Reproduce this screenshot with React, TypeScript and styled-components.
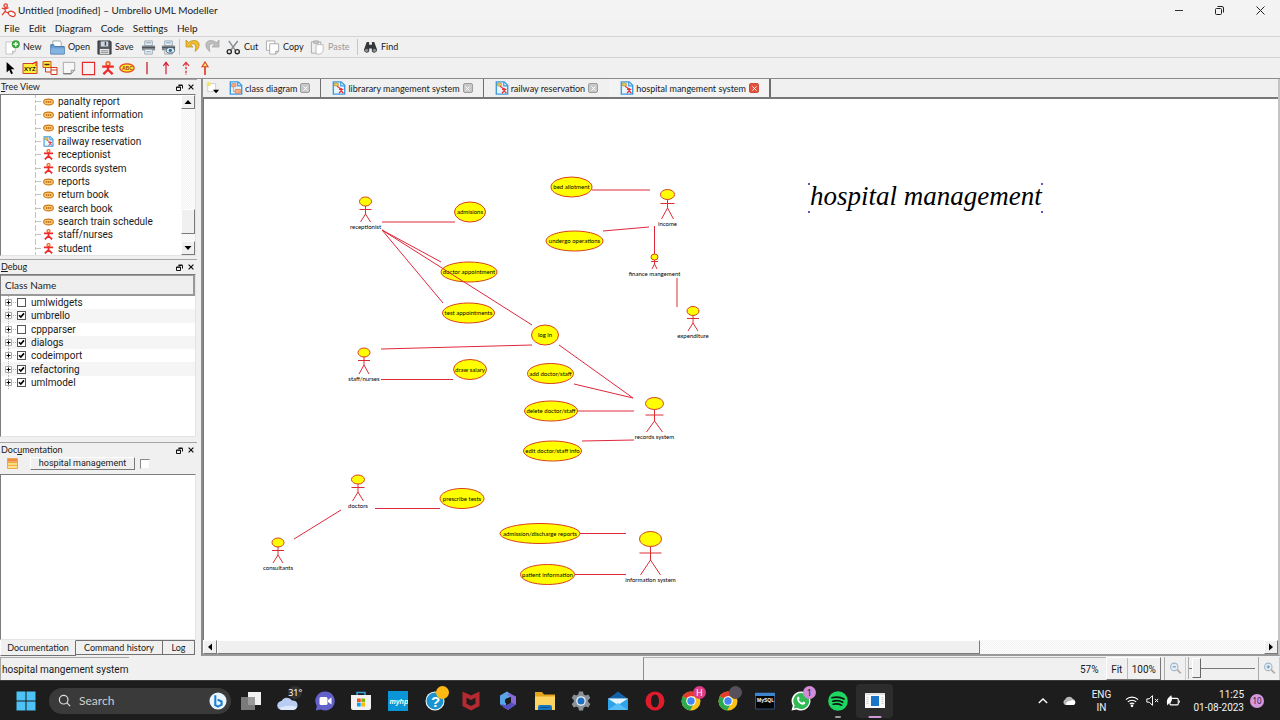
import React from 'react';
import styled, { createGlobalStyle, css } from 'styled-components';

const UI = '"Noto Sans", "Open Sans", sans-serif';
const SMALL = 'Lato, "Open Sans", sans-serif';
const TEXT = 'Roboto, "Open Sans", sans-serif';
const FACE = '#f0f0f0';
const EDGE = '#8a8a8a';

const GlobalStyle = createGlobalStyle`
  *, *::before, *::after { box-sizing: border-box; }
  body { margin: 0; background: ${FACE}; color: #1a1a1a; font-family: ${TEXT}; font-size: 10px; font-variant-ligatures: none; }
  button, input, textarea { font: inherit; color: inherit; margin: 0; }
  button { border: 0; padding: 0; background: none; }
  svg { display: block; flex: none; }
  ul { list-style: none; margin: 0; padding: 0; }
`;

const Page = styled.div`
  display: flex;
  flex-direction: column;
  min-height: 100vh;
`;

/* ---------- window frame ---------- */

const TitleBar = styled.header`
  display: flex;
  align-items: center;
  height: 20px;
  padding-left: 1px;
  gap: 2px;
  background: #f4f3f4;
`;
const WindowTitle = styled.h1`
  flex: 1;
  margin: 0;
  font: 400 10px/20px ${SMALL};
`;
const WindowButton = styled.button`
  display: grid;
  place-items: center;
  width: 39px;
  height: 20px;
`;
const MenuBar = styled.nav`
  display: flex;
  height: 16px;
  padding-left: 4px;
  gap: 9px;
  background: #f2f2f2;
`;
const MenuItem = styled.button`
  font: 400 10px/16px ${SMALL};
`;
const ToolBar = styled.div`
  display: flex;
  align-items: center;
  height: 22px;
  padding-left: 5px;
  border-top: 1px solid #d4d4d4;
  border-bottom: 1px solid #d4d4d4;
`;
const ToolButton = styled.button<{ $w: number }>`
  display: flex;
  align-items: center;
  gap: 3px;
  width: ${(p) => p.$w}px;
  height: 20px;
  font: 400 9px/20px ${SMALL};
  white-space: nowrap;
  &:disabled { color: #9a9a9a; }
`;
const ToolSeparator = styled.span`
  width: 1px;
  height: 16px;
  margin-right: 5px;
  background: #c6c6c6;
`;
const WidgetBar = styled.div`
  display: flex;
  height: 20px;
  width: 215px;
  padding-left: 1px;
`;
const WidgetButton = styled.button`
  flex: 1;
  display: grid;
  place-items: center;
`;

/* ---------- docks ---------- */

const Workspace = styled.main`
  flex: 1;
  display: flex;
  min-height: 0;
  border-top: 1px solid ${EDGE};
`;
const Docks = styled.aside`
  display: flex;
  flex-direction: column;
  width: 197px;
`;
const Dock = styled.section<{ $h: number; $grow?: boolean }>`
  display: flex;
  flex-direction: column;
  flex: ${(p) => (p.$grow ? 1 : 0)} 0 ${(p) => p.$h}px;
`;
const DockHeader = styled.header`
  display: flex;
  align-items: center;
  height: 15px;
  padding: 0 2px 0 1px;
  gap: 4px;
  border-top: 1px solid #a5a5a5;
`;
const DockTitle = styled.h2`
  flex: 1;
  margin: 0;
  font: 400 9px/14px ${SMALL};
`;
const IconButton = styled.button`
  display: grid;
  place-items: center;
  width: 8px;
  height: 10px;
`;
const sunken = css`
  border: 1px solid;
  border-color: #7c7c7c #e4e4e4 #e4e4e4 #7c7c7c;
`;
const TreeFrame = styled.div`
  display: flex;
  height: 162px;
  margin-right: 1px;
  background: #fff;
  ${sunken}
`;
const TreeList = styled.ul`
  flex: 1;
  display: flex;
  flex-direction: column;
`;
const TreeRow = styled.li`
  flex: 1;
  display: flex;
  align-items: center;
  margin-left: 34px;
  border-left: 1px dashed #c4c4bc;
  font: 400 10px/13px ${TEXT};
  &::before {
    content: '';
    width: 5px;
    margin-right: 2px;
    border-top: 1px dashed #c4c4bc;
  }
  span { margin-left: 4px; }
`;
const VScroll = styled.div`
  display: flex;
  flex-direction: column;
  width: 14px;
  background: repeating-conic-gradient(#f1f1f1 0 25%, #fff 0 50%) 0 0 / 2px 2px;
`;
const raised = css`
  background: ${FACE};
  border: 1px solid;
  border-color: #fff #7a7a7a #7a7a7a #fff;
`;
const ScrollArrow = styled.button`
  display: grid;
  place-items: center;
  width: 14px;
  height: 14px;
  flex: none;
  ${raised}
`;
const VThumb = styled.div`
  height: 25px;
  margin: auto 0 7px;
  ${raised}
`;

const ClassFrame = styled.div`
  flex: 1;
  margin: 0 1px 5px 0;
  background: #fff;
  ${sunken}
`;
const ClassHeader = styled.div`
  height: 21px;
  padding-left: 4px;
  background: #efefef;
  border: 1px solid #999;
  border-width: 1px 2px 2px 0;
  font: 400 10px/19px ${SMALL};
`;
const ClassList = styled.ul`
  display: flex;
  flex-direction: column;
  height: 93px;
`;
const ClassRow = styled.li`
  flex: 1;
  display: flex;
  align-items: center;
  padding-left: 4px;
  &:nth-child(even) { background: #f5f5f5; }
  label {
    display: flex;
    align-items: center;
    gap: 5px;
    font: 400 10px/13px ${TEXT};
  }
`;
const Check = styled.input.attrs({ type: 'checkbox' })`
  appearance: none;
  width: 9px;
  height: 9px;
  background: #fff;
  border: 1px solid #555;
  &:checked {
    background: #fff url("data:image/svg+xml,%3Csvg xmlns='http://www.w3.org/2000/svg' viewBox='0 0 7 7'%3E%3Cpath d='M1 3.2 L2.8 5 L6 1.4' fill='none' stroke='%23000' stroke-width='1.6'/%3E%3C/svg%3E") center / 7px 7px no-repeat;
  }
`;
const DocRow = styled.div`
  display: flex;
  align-items: center;
  height: 13px;
  padding-left: 7px;
`;
const DocName = styled.button`
  width: 105px;
  height: 13px;
  margin: 0 5px 0 12px;
  font: 400 9px/11px ${TEXT};
  ${raised}
`;
const DocCheck = styled(Check)`
  width: 10px;
  height: 10px;
  border-color: #888 #eee #eee #888;
`;
const DocText = styled.textarea`
  flex: 1;
  display: block;
  margin: 4px 1px 0 0;
  resize: none;
  outline: 0;
  background: #fff;
  ${sunken}
`;
const DockTabs = styled.div`
  display: flex;
  align-items: flex-start;
  height: 16px;
`;
const DockTab = styled.button<{ $w: number; $active?: boolean }>`
  width: ${(p) => p.$w}px;
  height: ${(p) => (p.$active ? 16 : 15)}px;
  font: 400 9px/14px ${SMALL};
  background: ${FACE};
  border: 1px solid #707070;
  border-left: 0;
  ${(p) => p.$active && 'border-top-color: transparent; border-left: 1px solid #fff;'}
`;

/* ---------- editor ---------- */

const Editor = styled.section`
  flex: 1;
  min-width: 0;
  display: flex;
  flex-direction: column;
  margin-left: 4px;
  border-left: 2px solid #8c8c8c;
  border-right: 2px solid #c4c4c4;
  border-bottom: 2px solid #999;
`;
const TabStrip = styled.div`
  display: flex;
  height: 20px;
  padding-left: 3px;
  border-bottom: 2px solid #777;
`;
const NewTab = styled.button`
  display: grid;
  place-items: center;
  width: 12px;
`;
const Tab = styled.div<{ $active?: boolean; $plain?: boolean }>`
  display: flex;
  align-items: center;
  padding: 0 10px 0 11px;
  gap: 3px;
  border-right: 1px solid ${(p) => (p.$plain ? 'transparent' : '#6e6e6e')};
  ${(p) => p.$active && 'border-right-width: 2px; background: #f3f3f3;'}
`;
const TabName = styled.button`
  display: flex;
  align-items: center;
  gap: 2px;
  font: 400 9px/17px ${SMALL};
  white-space: nowrap;
`;
const CloseTab = styled.button<{ $active?: boolean }>`
  display: grid;
  place-items: center;
  width: 10px;
  height: 10px;
  border-radius: 2px;
  border: 1px solid ${(p) => (p.$active ? '#cf4a38' : '#9c9c9c')};
  background: ${(p) => (p.$active ? '#e2543f' : '#c8c8c8')};
`;
const Canvas = styled.div`
  flex: 1;
  min-height: 0;
  overflow: hidden;
  background: #fff;
  border-left: 1px solid #777;
  svg { width: 100%; height: 100%; }
`;
const HScroll = styled.div`
  display: flex;
  height: 14px;
  background: repeating-conic-gradient(#f1f1f1 0 25%, #fff 0 50%) 0 0 / 2px 2px;
`;
const HThumb = styled.div`
  width: 71%;
  margin-right: auto;
  ${raised}
`;

/* ---------- status bar ---------- */

const StatusBar = styled.footer`
  display: flex;
  align-items: stretch;
  height: 24px;
  padding-top: 1px;
  font: 400 10px/23px ${TEXT};
`;
const StatusText = styled.div`
  flex: 1;
  span { display: inline-block; padding: 0 1px; border-top: 1px solid #a8a8a8; border-left: 1px solid #a8a8a8; }
`;
const StatusCell = styled.div`
  flex: 0 0 429px;
  border-left: 1px solid #8c8c8c;
  border-top: 1px solid #b4b4b4;
`;
const ZoomValue = styled.output`
  width: 34px;
  padding-left: 8px;
  border-top: 1px solid #b4b4b4;
`;
const ZoomButtons = styled.div`
  display: flex;
  width: 55px;
  border: 1px solid;
  border-color: #fff #777 #777 #fff;
  button { flex: 1 1 auto; padding: 0 3px; }
  button + button { border-left: 1px solid #bbb; }
`;
const ZoomStep = styled.button`
  display: grid;
  place-items: center;
  width: 22px;
  margin-left: 3px;
  border-left: 1px solid #aaa;
  border-right: 1px solid #ccc;
`;
const ZoomSlider = styled.input.attrs({ type: 'range' })`
  appearance: none;
  width: 67px;
  height: 22px;
  margin-left: 2px;
  background: linear-gradient(#777, #777) center / 100% 1px no-repeat;
  border-left: 1px solid #aaa;
  &::-webkit-slider-thumb {
    appearance: none;
    width: 9px;
    height: 20px;
    background: ${FACE};
    border: 1px solid;
    border-color: #fff #666 #666 #fff;
  }
`;

/* ---------- task bar ---------- */

const TaskBar = styled.footer`
  display: flex;
  align-items: center;
  height: 40px;
  padding: 0 16px;
  background: #1d1d1d;
  border-top: 1px solid #3a3a3a;
  color: #f2f2f2;
`;
const StartButton = styled.button`
  width: 33px;
`;
const SearchBox = styled.label`
  display: flex;
  align-items: center;
  gap: 8px;
  width: 182px;
  height: 26px;
  padding: 0 4px 0 9px;
  border-radius: 13px;
  background: #3a3a3a;
  input {
    flex: 1;
    min-width: 0;
    padding: 0;
    border: 0;
    outline: 0;
    background: none;
    font: 400 12px/20px ${SMALL};
  }
  input::placeholder { color: #cfcfcf; opacity: 1; }
`;
const Pinned = styled.div`
  display: flex;
  width: 660px;
  margin-left: 2px;
`;
const TaskButton = styled.button<{ $mark?: string; $active?: boolean }>`
  flex: 1;
  position: relative;
  display: grid;
  place-items: center;
  height: 34px;
  border-radius: 4px;
  ${(p) => p.$active && 'background: #2c2c2c;'}
  &::after {
    content: '';
    position: absolute;
    bottom: 0;
    left: 50%;
    width: ${(p) => (p.$active ? 13 : 6)}px;
    height: 2px;
    border-radius: 1px;
    transform: translateX(-50%);
    background: ${(p) => p.$mark || 'transparent'};
  }
`;
const Bubble = styled.span<{ $bg: string; $fg: string }>`
  position: absolute;
  top: 2px;
  right: 4px;
  min-width: 13px;
  height: 13px;
  border-radius: 7px;
  text-align: center;
  font: 400 9px/13px ${UI};
  background: ${(p) => p.$bg};
  color: ${(p) => p.$fg};
`;
const Tray = styled.div`
  display: flex;
  align-items: center;
  margin-left: auto;
`;
const TrayButton = styled.button<{ $w: number }>`
  display: flex;
  flex-direction: column;
  align-items: center;
  width: ${(p) => p.$w}px;
  font: 400 10px/13px ${TEXT};
`;
const Clock = styled(TrayButton)`
  align-items: flex-end;
  margin-right: 6px;
`;
const Count = styled.span`
  width: 14px;
  height: 14px;
  border-radius: 7px;
  background: #d698dc;
  color: #3a1440;
  text-align: center;
  font: 400 8px/14px ${UI};
`;

/* ---------- small drawings ---------- */

type IconProps = { w?: number; h?: number; box?: string; children: React.ReactNode };
const Icon = ({ w = 16, h = w, box = '0 0 16 16', children }: IconProps) => (
  <svg width={w} height={h} viewBox={box} fill="none" aria-hidden="true">{children}</svg>
);

const AppLogo = () => (
  <Icon w={15}>
    <g stroke="#e03a2a" strokeWidth="1.3">
      <circle cx="5" cy="2.8" r="1.8" /><path d="M1 5.5 4 6.5 8 5M4.5 5v4L1 13M4.5 9 8 11" />
      <ellipse cx="11.5" cy="11.5" rx="3.8" ry="2.5" transform="rotate(25 11.5 11.5)" fill="#fff" />
    </g>
  </Icon>
);
const ActorIcon = ({ size = 11 }: { size?: number }) => (
  <Icon w={size} box="0 0 12 12">
    <circle cx="6" cy="2.3" r="1.7" stroke="#ea5a2a" strokeWidth="1.2" fill="#ffd9a0" />
    <path d="M1 4.8h10M6 4v4M6 7.5 2 11.3M6 7.5l4 3.8" stroke="#ee2b2b" strokeWidth="2" />
  </Icon>
);
const UseCaseIcon = () => (
  <Icon w={11} h={8} box="0 0 11 8">
    <ellipse cx="5.5" cy="4" rx="4.9" ry="2.9" fill="#ffcf6b" stroke="#cc7a22" strokeWidth="1.1" />
    <path d="M2.8 4h5.4" stroke="#b05a18" strokeWidth="1.3" strokeDasharray="1.5 .6" />
  </Icon>
);
const DiagramIcon = ({ size = 14, cls = false }: { size?: number; cls?: boolean }) => (
  <Icon w={size}>
    <path d="M1.5 1h9l4 4v10h-13z" fill="#e9f5ff" stroke="#3d9be0" strokeWidth="1.6" />
    <path d="M10 1v4.500h4.500" stroke="#3d9be0" strokeWidth="1.4" />
    {cls ? (
      <g fill="#f6b08a" stroke="#d9764a" strokeWidth=".8"><path d="M3 3h5v3.500H3zM7 9.500h6V14H7z" /><path d="M5 6.500V12h2" fill="none" /></g>
    ) : (
      <g><ellipse cx="5" cy="4" rx="2.600" ry="1.800" fill="#e8d060" stroke="#b08a30" /><path d="M6 6l4 3M8 9.500h5M10.500 8v4M10.500 11 8 14M10.500 11l2.500 3" stroke="#e63434" strokeWidth="1.400" /></g>
    )}
  </Icon>
);
const FloatIcon = () => (
  <Icon w={7} box="0 0 7 7"><path d="M2.500 1.500h4v3M2.500 1h4M.5 3h4v3.500h-4zM.5 3.300h4" stroke="#111" /></Icon>
);
const CrossIcon = ({ size = 6, color = '#111' }: { size?: number; color?: string }) => (
  <Icon w={size} box="0 0 6 6"><path d="M.6.6l4.800 4.800M5.400.6.6 5.400" stroke={color} strokeWidth="1.200" /></Icon>
);
const Arrow = ({ turn }: { turn: number }) => (
  <Icon w={8} box="0 0 8 8"><path d="M4 2l3.500 4h-7z" fill="#000" transform={`rotate(${turn} 4 4)`} /></Icon>
);
const PrinterBody = () => (
  <g>
    <path d="M4 1h8v5H4z" fill="#eaf1f6" stroke="#9aa5ad" /><path d="M1 6h14v5H1z" fill="#7d858b" />
    <path d="M1 8h14" stroke="#4a5258" /><path d="M4 10h8v5H4z" fill="#f6f6f6" stroke="#9aa5ad" /><path d="M5.500 3h5M5.500 12.500h5" stroke="#6d9bc0" />
  </g>
);
const Magnifier = ({ plus }: { plus?: boolean }) => (
  <Icon w={13}>
    <circle cx="6.500" cy="6" r="4.600" fill="#e2edf6" stroke="#a3b5c6" strokeWidth="1.300" />
    <path d="M4.500 6h4" stroke="#6d92b4" strokeWidth="1.300" />
    {plus && <path d="M6.500 4v4" stroke="#6d92b4" strokeWidth="1.300" />}
    <path d="M10 9.500l4.500 4.500" stroke="#b9aaa0" strokeWidth="2.200" />
  </Icon>
);

const toolIcons: Record<string, React.ReactNode> = {
  New: <Icon w={15}><path d="M1 2h10v10l-3 3H1z" fill="#fff" stroke="#c3c3c3" /><path d="M11 12H8v3" fill="#ddd" stroke="#bbb" /><circle cx="11.500" cy="4.500" r="4.300" fill="#3ba53a" /><path d="M11.500 2v5M9 4.500h5" stroke="#fff" strokeWidth="1.600" /></Icon>,
  Open: <Icon w={15}><path d="M3 1h8l1 2v6H3z" fill="#fff" stroke="#9aa" /><path d="M.8 5h3l1 2h10.400v8H.8z" fill="#6c9fd3" stroke="#4273a8" /><path d="M1 9h14v5.500H1z" fill="#86b4e2" /></Icon>,
  Save: <Icon w={15}><path d="M1 1h13l1 1v13H1z" fill="#53575c" stroke="#2d3034" /><path d="M4 1.500h8v5.500H4z" fill="#cfd8e0" /><path d="M9 2v4" stroke="#444" strokeWidth="1.500" /><path d="M3 9.500h10V15H3z" fill="#e4e6e8" /><path d="M4 11.500h8M4 13.500h8" stroke="#8a8a8a" /></Icon>,
  Print: <Icon w={15}><PrinterBody /></Icon>,
  'Print preview': <Icon w={15}><PrinterBody /><ellipse cx="10" cy="11" rx="4.500" ry="3" fill="#dbe9f3" stroke="#456" /><circle cx="10" cy="11" r="1.700" fill="#256e9a" /></Icon>,
  Undo: <Icon w={16}><path d="M1 1v7h7L5.500 5.600C9 3.500 12 5.500 10 12.500c6-4 5.500-11.500-1.500-11-2 .2-3.700 1-5 2z" fill="#efbd2e" stroke="#b98a1c" strokeWidth=".7" /></Icon>,
  Redo: <Icon w={16}><path d="M15 1v7H8l2.500-2.400C7 3.500 4 5.500 6 12.500 0 8.500 .5 1 7.500 1.500c2 .2 3.700 1 5 2z" fill="#bdbdbd" stroke="#a2a2a2" strokeWidth=".7" /></Icon>,
  Cut: <Icon w={15}><path d="M3 1l7 10M12.500 1 5 11" stroke="#8b8f93" strokeWidth="1.600" /><circle cx="3.500" cy="12.500" r="2.200" stroke="#2c2c2c" strokeWidth="1.500" /><circle cx="12" cy="12.500" r="2.200" stroke="#2c2c2c" strokeWidth="1.500" /></Icon>,
  Copy: <Icon w={15}><path d="M1.500 1h9v10h-9z" fill="#fff" stroke="#aaa" /><path d="M5 4h9.500v8l-3 3H5z" fill="#fff" stroke="#aaa" /><path d="M14.500 12h-3v3" stroke="#999" /></Icon>,
  Paste: <Icon w={15}><path d="M1.500 2h10v12h-10z" fill="#efefef" stroke="#aaa" /><path d="M4 1h5v2.500H4z" fill="#ccc" stroke="#aaa" /><path d="M6.500 5H14v7l-3 3H6.500z" fill="#fff" stroke="#bbb" /></Icon>,
  Find: <Icon w={15}><path d="M4 2h2.500v3h3V2H12l3 8.500a3 3 0 0 1-5.600 1.500V9H6.600v3A3 3 0 0 1 1 10.500z" fill="#35383a" /><circle cx="3.800" cy="11" r="1.800" fill="#8a8f92" /><circle cx="12.200" cy="11" r="1.800" fill="#8a8f92" /></Icon>,
};

const glyph = { fontFamily: 'Liberation Sans, sans-serif', fontWeight: 700 };
const widgetTools: [string, React.ReactNode][] = [
  ['Select', <Icon w={14}><path d="M3 1v12l3-2.600 2.200 4.600 2-1L8 9.500h4z" fill="#000" /></Icon>],
  ['Fork text', <Icon w={16}><path d="M1 3.500h10l4-2v12H1z" fill="#ffee3a" stroke="#c9432a" /><path d="M10 4l4-2M14 2v4" stroke="#e02020" /><text x="2" y="11" fontSize="6" fill="#111" style={glyph}>XYZ</text></Icon>],
  ['Anchor', <Icon w={16}><path d="M1 1.500h8v6H1z" fill="#ffee3a" stroke="#d3541e" /><path d="M2.500 4.500h5" stroke="#522" strokeWidth="1.500" /><path d="M9 7.500h6v7H9zM9 10h6" fill="#fff" stroke="#d33a1e" /><path d="M3.500 7.500V12H9" stroke="#d33a1e" /></Icon>],
  ['Note', <Icon w={14}><path d="M1.500 1.500h13v9l-4 4h-9z" fill="#f7f7f7" stroke="#a0a0a0" /><path d="M14.500 10.500h-4v4z" fill="#ddd" stroke="#8f8f8f" /><path d="M1.500 14.500h9" stroke="#7d7d7d" strokeWidth="1.500" /></Icon>],
  ['Box', <Icon w={15}><path d="M1.500 1.500h13v13h-13z" fill="#f6f0f0" stroke="#e32a2a" strokeWidth="1.200" /></Icon>],
  ['Actor', <ActorIcon size={14} />],
  ['Use case', <Icon w={16}><ellipse cx="8" cy="8" rx="7.200" ry="4.200" fill="#ffe92e" stroke="#e0471e" strokeWidth="1.200" /><text x="3" y="10" fontSize="5" fill="#a33" style={glyph}>ABC</text></Icon>],
  ['Association', <Icon w={14}><path d="M8 1v14" stroke="#cf2030" strokeWidth="1.500" /></Icon>],
  ['Directed association', <Icon w={14}><path d="M8 2v13M5 5.500l3-4 3 4" stroke="#d81f3a" strokeWidth="1.400" /></Icon>],
  ['Dependency', <Icon w={14}><path d="M8 2v14" stroke="#e0303a" strokeWidth="1.600" strokeDasharray="3 1.500" /><path d="M4.500 5.500l3.500-4 3.500 4" stroke="#e0303a" strokeWidth="1.400" /></Icon>],
  ['Generalization', <Icon w={14}><path d="M8 6v10" stroke="#e0301a" strokeWidth="1.800" /><path d="M4.500 6.500 8 1l3.500 5.500z" fill="#ffe07a" stroke="#e0401a" strokeWidth="1.200" /></Icon>],
];

/* ---------- diagram ---------- */

type UseCase = [name: string, cx: number, cy: number, rx: number];
const useCases: UseCase[] = [
  ['bed allotment', 571.5, 187, 20.5], ['admisions', 470, 212, 15.5], ['undergo operations', 574.5, 241, 28.5],
  ['doctor appointment', 469, 272, 28], ['test appointments', 468.5, 313, 26], ['log in', 545, 335, 13.5],
  ['draw salary', 470, 369.5, 16.5], ['add doctor/staff', 550.5, 373.5, 23], ['delete doctor/staff', 551, 411, 26.5],
  ['edit doctor/staff info', 552.5, 451, 29], ['prescribe tests', 462, 498.5, 22],
  ['admission/discharge reports', 540, 533.5, 40], ['patient information', 547.5, 574.5, 27],
];

type Actor = [name: string, cx: number, cy: number, rx: number, ry: number, arm: number, hip: number, foot: number];
const actors: Actor[] = [
  ['receptionist', 365.5, 201.5, 6, 4.5, 209.5, 214, 222], ['income', 667.5, 194.5, 7, 5, 203.5, 208, 219],
  ['finance mangement', 654.5, 257, 3.5, 3, 261.5, 264, 269], ['expenditure', 693, 311, 6, 4.5, 318.5, 323, 331],
  ['staff/nurses', 364, 352.5, 6, 4.5, 360.5, 365, 374], ['records system', 654.5, 403.5, 9, 6, 415, 421, 432],
  ['doctors', 358, 479.5, 6.5, 4.5, 487.5, 492, 501], ['consultants', 278, 542.5, 6, 4.5, 550.5, 555, 563],
  ['information system', 650.5, 539, 11, 7.5, 553, 560, 575],
];

const links: [number, number, number, number][] = [
  [382, 222, 455, 222], [382, 230, 441, 262], [382, 230, 443, 303], [382, 230, 532, 325], [381, 349, 532, 345],
  [381, 379.5, 453, 379.5], [559, 345, 633, 398], [574, 384, 633, 398], [578, 411, 634, 411], [582, 441, 634, 440],
  [592, 190, 650, 190], [603, 231, 649, 227], [654.5, 226, 654.5, 254], [677, 278, 677, 307], [375, 508.5, 440, 508.5],
  [294, 539, 341, 510], [580, 533.5, 626, 533.5], [575, 574.5, 626, 574.5],
];

const Label = styled.text`
  font: 400 6px ${SMALL};
  text-anchor: middle;
  fill: #000;
`;
const Caption = styled.text`
  font: italic 400 27px "Liberation Serif", serif;
  fill: #000;
`;

const Diagram = () => (
  <svg role="img" aria-label="hospital mangement system diagram">
    <g transform="translate(-204 -99)">
      {useCases.map(([name, cx, cy, rx]) => (
        <g key={name}>
          <ellipse cx={cx} cy={cy} rx={rx} ry={10} fill="#ff0" stroke="#d8401c" />
          <Label x={cx} y={cy + 2}>{name}</Label>
        </g>
      ))}
      {links.map(([x1, y1, x2, y2]) => (
        <line key={`${x1}-${y1}-${x2}`} x1={x1} y1={y1} x2={x2} y2={y2} stroke="#e0283c" />
      ))}
      {actors.map(([name, cx, cy, rx, ry, arm, hip, foot]) => (
        <g key={name} stroke="#dc2c34">
          <ellipse cx={cx} cy={cy} rx={rx} ry={ry} fill="#ff0" stroke="#d8401c" />
          <path d={`M${cx} ${cy + ry}V${hip}M${cx - rx} ${arm}h${rx * 2}M${cx - rx + 1} ${foot}L${cx} ${hip}L${cx + rx - 1} ${foot}`} fill="none" />
          <Label x={cx} y={foot + 7} stroke="none">{name}</Label>
        </g>
      ))}
      <Caption x={810} y={205}>hospital management</Caption>
      {[[809, 184], [1042, 184], [809, 212], [1042, 212]].map(([x, y]) => (
        <circle key={`${x}-${y}`} cx={x} cy={y} r="1" fill="#2222a8" />
      ))}
    </g>
  </svg>
);

/* ---------- task bar drawings ---------- */

const Chrome = () => (
  <Icon w={20} box="0 0 20 20">
    <circle cx="10" cy="10" r="9.500" fill="#fbc116" />
    <path d="M10 10 1.800 5.200A9.500 9.500 0 0 1 18.200 5.200H10z" fill="#e33b2e" />
    <path d="M1.800 5.200A9.500 9.500 0 0 0 9 19.400l4-7L10 10z" fill="#2da94f" />
    <circle cx="10" cy="10" r="4.800" fill="#fff" /><circle cx="10" cy="10" r="3.700" fill="#4285f4" />
  </Icon>
);

type Pin = { name: string; art: React.ReactNode; bubble?: [string, string, string]; mark?: string; active?: boolean };
const box = '0 0 20 20';
const pins: Pin[] = [
  { name: 'Task view', art: <Icon w={20} box={box}><path d="M7 1h13v13H7z" fill="#f0f0f0" /><path d="M0 6h14v13H0z" fill="#8b8b8b" opacity=".85" /></Icon> },
  { name: 'Weather', art: <Icon w={22} h={20} box="0 0 22 20"><path d="M5 19a4.500 4.500 0 0 1-.5-9A6 6 0 0 1 15 9.500a4.800 4.800 0 0 1 1.500 9.500z" fill="#b9cdf2" /><path d="M5 19a4 4 0 0 1-3-1.500C7 14 14 14 20 16a4 4 0 0 1-3.500 3z" fill="#dfe9fb" /></Icon>, bubble: ['31°', '#303030', '#fff'] },
  { name: 'Chat', art: <Icon w={20} box={box}><path d="M10 .5a9.500 9.500 0 1 1-4 18L.8 19.600 1.800 15A9.500 9.500 0 0 1 10 .5z" fill="#6260c9" /><rect x="4.500" y="6" width="8" height="8" rx="1.500" fill="#fff" /><path d="M13 9l3.500-2.500v7L13 11z" fill="#fff" /></Icon> },
  { name: 'Store', art: <Icon w={20} box={box}><path d="M6 5V1.500h8V5" stroke="#36a3dd" strokeWidth="1.500" /><path d="M0 4h20v13q0 2-2 2H2q-2 0-2-2z" fill="#f2f2f2" /><path d="M6 7.500h3.700v3.700H6z" fill="#f25022" /><path d="M10.300 7.500H14v3.700h-3.700z" fill="#7fba00" /><path d="M6 11.800h3.700v3.700H6z" fill="#00a4ef" /><path d="M10.300 11.800H14v3.700h-3.700z" fill="#ffb900" /></Icon> },
  { name: 'myHP', art: <Icon w={20} box={box}><path d="M0 0h20v20H0z" fill="#0a96d6" /><text x="1.500" y="12.500" fontSize="7" fill="#fff" style={{ ...glyph, fontStyle: 'italic' }}>myhp</text></Icon> },
  { name: 'Help', art: <Icon w={20} box={box}><circle cx="10" cy="10" r="9.500" fill="#fff" /><circle cx="10" cy="10" r="8.500" fill="#1a94cf" /><text x="6" y="15.500" fontSize="15" fill="#fff" style={glyph}>?</text></Icon>, bubble: ['', '#fdb913', '#000'] },
  { name: 'McAfee', art: <Icon w={20} box={box}><path d="M1.500.5 10 4.500l8.500-4V15L10 19.500 1.500 15zM5.500 6.500v6.200l4.500 2.400 4.500-2.400V6.500L10 9z" fill="#b52a31" fillRule="evenodd" /></Icon> },
  { name: 'Microsoft 365', art: <Icon w={20} box={box}><path d="M9 .5 2 4.500v9l3.500 2L8 14V8l5-2.500V3z" fill="#5aa4e8" /><path d="M11 2l7 3.500v8L10 19l-5-3 8-4V6L9 4z" fill="#8a6ad8" /><path d="M2 13.500 10 19l8-5.500-5-2-5 3-3-1z" fill="#5550bd" /><path d="M10 6.800l3 1.700v3l-3 1.700-3-1.700v-3z" fill="#1d1d1d" /></Icon> },
  { name: 'File Explorer', art: <Icon w={20} box={box}><path d="M0 1h7l2 2.500h11V10H0z" fill="#e6a41c" /><path d="M0 5.500h20V19H0z" fill="#fcd462" /><path d="M3 19v-3q0-2 2-2h10q2 0 2 2v3z" fill="#1676c4" /><path d="M5.500 16.500h9" stroke="#0b4f8f" /></Icon> },
  { name: 'Settings', art: <Icon w={20} box={box}><path d="M8 .5h4l.6 2.800 2 1.100 2.700-.9 2 3.400-2.100 2v2.200l2.100 2-2 3.400-2.700-.9-2 1.100-.6 2.800H8l-.6-2.800-2-1.100-2.700.9-2-3.400 2.100-2V8.900l-2.100-2 2-3.400 2.700.9 2-1.100z" fill="#8b9299" /><circle cx="10" cy="10" r="4.800" fill="#e9f1f8" /><circle cx="10" cy="10" r="3.500" fill="#1d6fc0" /></Icon> },
  { name: 'Mail', art: <Icon w={20} box={box}><path d="M0 8 10 .5 20 8v11H0z" fill="#1463a8" /><path d="M0 7.500h20V19H0z" fill="#2ea3ea" /><path d="M0 7.500h20L10 14z" fill="#e8f4fc" /><path d="M0 19l10-7 10 7z" fill="#57bdf5" /></Icon> },
  { name: 'Opera', art: <Icon w={20} box={box}><path d="M10 .5a9.500 9.500 0 1 0 0 19 9.500 9.500 0 0 0 0-19zm0 3c2.300 0 4 2.800 4 6.500s-1.700 6.500-4 6.500S6 13.700 6 10s1.700-6.500 4-6.500z" fill="#e01b2c" fillRule="evenodd" /></Icon> },
  { name: 'Chrome', art: <Chrome />, bubble: ['H', '#dd3b82', '#fff'] },
  { name: 'Chrome, second profile', art: <Chrome />, bubble: ['', '#57505a', '#fff'] },
  { name: 'MySQL', art: <Icon w={20} box={box}><path d="M.5 2h19v16H.5z" fill="#050505" stroke="#2f4f7d" /><path d="M0 2h20v3H0z" fill="#3d86cf" /><text x="2" y="11" fontSize="5" fill="#fff" style={glyph}>MySQL</text></Icon> },
  { name: 'WhatsApp', art: <Icon w={20} box={box}><path d="M10 .5a9.500 9.500 0 1 1-4.500 17.900L.5 19.500l1.300-4.800A9.500 9.500 0 0 1 10 .5z" fill="#fff" /><path d="M10 2a8 8 0 1 1-4 14.800l-3.200.8.9-3.100A8 8 0 0 1 10 2z" fill="#30b954" /><path d="M6.300 6.200c1-1.300 1.800-.6 2.400 1.300l-.9 1.200c.8 1.500 1.800 2.300 3.300 3l1.200-1.100c2 .8 2.400 1.200 1.500 2.400-2.700 2.800-9-2.800-7.500-6.800z" fill="#fff" /></Icon>, bubble: ['1', '#d18bd8', '#222'] },
  { name: 'Spotify', art: <Icon w={20} box={box}><circle cx="10" cy="10" r="9.800" fill="#1ed760" /><path d="M4 6.800c4-1.200 8.500-.8 12 1.200M4.800 10.200c3.500-1 7-.6 10 1M5.300 13.300c3-.8 5.800-.4 8.300.9" stroke="#111" strokeWidth="1.700" strokeLinecap="round" /></Icon>, mark: '#9a9a9a' },
  { name: 'Umbrello', art: <Icon w={20} h={16} box="0 0 20 16"><path d="M0 0h20v15H0z" fill="#fafafa" /><path d="M0 1h20" stroke="#c9c9c9" /><path d="M6 3h8v10H6z" fill="#1b75c9" /><path d="M2.500 4v8M17.500 4v8" stroke="#ccc" strokeDasharray="1 1" strokeWidth="2" /></Icon>, mark: '#cf9ad6', active: true },
];

const treeItems: [string, 'case' | 'actor' | 'diagram'][] = [
  ['panalty report', 'case'], ['patient information', 'case'], ['prescribe tests', 'case'], ['railway reservation', 'diagram'],
  ['receptionist', 'actor'], ['records system', 'actor'], ['reports', 'case'], ['return book', 'case'], ['search book', 'case'],
  ['search train schedule', 'case'], ['staff/nurses', 'actor'], ['student', 'actor'],
];
const treeIcon = { case: <UseCaseIcon />, actor: <ActorIcon />, diagram: <DiagramIcon size={11} /> };

const classes: [string, boolean][] = [
  ['umlwidgets', false], ['umbrello', true], ['cppparser', false], ['dialogs', true], ['codeimport', true], ['refactoring', true], ['umlmodel', true],
];

const openTabs = ['class diagram', 'librarary mangement system', 'railway reservation', 'hospital mangement system'];

/* `hot` is the index of the underlined access key */
const DockTop = ({ title, hot = 0 }: { title: string; hot?: number }) => (
  <DockHeader>
    <DockTitle>{title.slice(0, hot)}<u>{title[hot]}</u>{title.slice(hot + 1)}</DockTitle>
    <IconButton aria-label={`Float ${title}`}><FloatIcon /></IconButton>
    <IconButton aria-label={`Close ${title}`}><CrossIcon /></IconButton>
  </DockHeader>
);

const Tool = ({ name, w, bare, off }: { name: string; w: number; bare?: boolean; off?: boolean }) => (
  <ToolButton $w={w} aria-label={name} disabled={off}>{toolIcons[name]}{!bare && name}</ToolButton>
);

export default function App() {
  return (
    <Page>
      <GlobalStyle />
      <TitleBar>
        <AppLogo />
        <WindowTitle>Untitled [modified] – Umbrello UML Modeller</WindowTitle>
        <WindowButton aria-label="Minimize"><Icon w={8} box="0 0 8 8"><path d="M0 4.500h8" stroke="#333" /></Icon></WindowButton>
        <WindowButton aria-label="Restore"><Icon w={9} box="0 0 9 9"><rect x=".5" y="2.500" width="6" height="6" rx="1" stroke="#222" /><path d="M2.500.5H7q1.500 0 1.500 1.500v4.500" stroke="#222" /></Icon></WindowButton>
        <WindowButton aria-label="Close"><Icon w={9} box="0 0 9 9"><path d="M.5.5l8 8M8.500.5l-8 8" stroke="#222" /></Icon></WindowButton>
      </TitleBar>
      <MenuBar>
        {['File', 'Edit', 'Diagram', 'Code', 'Settings', 'Help'].map((m) => <MenuItem key={m}>{m}</MenuItem>)}
      </MenuBar>
      <ToolBar>
        <Tool name="New" w={45} />
        <Tool name="Open" w={47} />
        <Tool name="Save" w={44} />
        <Tool name="Print" w={20} bare />
        <Tool name="Print preview" w={18} bare />
        <ToolSeparator />
        <Tool name="Undo" w={19} bare />
        <Tool name="Redo" w={22} bare />
        <Tool name="Cut" w={39} />
        <Tool name="Copy" w={45} />
        <Tool name="Paste" w={47} off />
        <ToolSeparator />
        <Tool name="Find" w={40} />
      </ToolBar>
      <WidgetBar>
        {widgetTools.map(([name, art]) => <WidgetButton key={name} aria-label={name}>{art}</WidgetButton>)}
      </WidgetBar>

      <Workspace>
        <Docks>
          <Dock $h={180}>
            <DockTop title="Tree View" />
            <TreeFrame>
              <TreeList>
                {treeItems.map(([name, kind]) => <TreeRow key={name}>{treeIcon[kind]}<span>{name}</span></TreeRow>)}
              </TreeList>
              <VScroll>
                <ScrollArrow aria-label="Scroll up"><Arrow turn={0} /></ScrollArrow>
                <VThumb />
                <ScrollArrow aria-label="Scroll down"><Arrow turn={180} /></ScrollArrow>
              </VScroll>
            </TreeFrame>
          </Dock>
          <Dock $h={183}>
            <DockTop title="Debug" />
            <ClassFrame>
              <ClassHeader>Class Name</ClassHeader>
              <ClassList>
                {classes.map(([name, on]) => (
                  <ClassRow key={name}>
                    <Icon w={12} h={13} box="0 0 12 13">
                      <path d="M3.500 0v13M6 6.500h6" stroke="#b5b5b5" strokeDasharray="1 1" />
                      <path d="M.5 3.500h6v6h-6z" fill="#fff" stroke="#aaa" /><path d="M1.500 6.500h4M3.500 4.500v4" stroke="#000" />
                    </Icon>
                    <label><Check defaultChecked={on} />{name}</label>
                  </ClassRow>
                ))}
              </ClassList>
            </ClassFrame>
          </Dock>
          <Dock $h={190} $grow>
            <DockTop title="Documentation" hot={3} />
            <DocRow>
              <Icon w={11} box="0 0 12 12"><path d="M.5.5h11v11H.5z" fill="#ffe08a" stroke="#e9a13b" /><path d="M1 1h10v3H1z" fill="#f08a4a" /><path d="M1 5h10M1 8h10" stroke="#e9a13b" /></Icon>
              <DocName>hospital management</DocName>
              <DocCheck aria-label="Keep documentation" />
            </DocRow>
            <DocText aria-label="Documentation" />
            <DockTabs>
              <DockTab $w={76} $active>Documentation</DockTab>
              <DockTab $w={87}>Command history</DockTab>
              <DockTab $w={32}>Log</DockTab>
            </DockTabs>
          </Dock>
        </Docks>

        <Editor>
          <TabStrip>
            <NewTab aria-label="New diagram">
              <Icon w={14}><path d="M2 3h9v9H2z" fill="#fff" stroke="#ccc" /><circle cx="3" cy="3.500" r="2.500" fill="#f3e36b" /><path d="M8 10h7l-3.500 4z" fill="#000" /></Icon>
            </NewTab>
            {openTabs.map((name, i) => {
              const active = i === openTabs.length - 1;
              return (
                <Tab key={name} $active={active} $plain={i === 2}>
                  <TabName><DiagramIcon cls={i === 0} />{name}</TabName>
                  <CloseTab $active={active} aria-label={`Close ${name}`}><CrossIcon size={5} color="#fff" /></CloseTab>
                </Tab>
              );
            })}
          </TabStrip>
          <Canvas><Diagram /></Canvas>
          <HScroll>
            <ScrollArrow aria-label="Scroll left"><Arrow turn={-90} /></ScrollArrow>
            <HThumb />
            <ScrollArrow aria-label="Scroll right"><Arrow turn={90} /></ScrollArrow>
          </HScroll>
        </Editor>
      </Workspace>

      <StatusBar>
        <StatusText><span>hospital mangement system</span></StatusText>
        <StatusCell />
        <ZoomValue>57%</ZoomValue>
        <ZoomButtons><button>Fit</button><button>100%</button></ZoomButtons>
        <ZoomStep aria-label="Zoom out"><Magnifier /></ZoomStep>
        <ZoomSlider aria-label="Zoom" min={0} max={100} defaultValue={6} />
        <ZoomStep aria-label="Zoom in"><Magnifier plus /></ZoomStep>
      </StatusBar>

      <TaskBar>
        <StartButton aria-label="Start">
          <Icon w={20} box={box}><path d="M.5.5h9v9h-9zM10.500.5h9v9h-9zM.5 10.500h9v9h-9zM10.500 10.500h9v9h-9z" fill="#4cc2f5" /></Icon>
        </StartButton>
        <SearchBox>
          <Icon w={13}><circle cx="7" cy="7" r="5.300" stroke="#ddd" strokeWidth="1.500" /><path d="M11 11l4 4" stroke="#ddd" strokeWidth="1.500" /></Icon>
          <input placeholder="Search" aria-label="Search" />
          <Icon w={18} box={box}><circle cx="10" cy="10" r="9.500" fill="#e9f5fc" /><path d="M7 3.500v11l3 1.800 4-2.300v-3.500L9.500 8.500" stroke="#1b7fd6" strokeWidth="2.300" /></Icon>
        </SearchBox>
        <Pinned>
          {pins.map((p) => (
            <TaskButton key={p.name} aria-label={p.name} $mark={p.mark} $active={p.active}>
              {p.art}
              {p.bubble && <Bubble $bg={p.bubble[1]} $fg={p.bubble[2]}>{p.bubble[0]}</Bubble>}
            </TaskButton>
          ))}
        </Pinned>
        <Tray>
          <TrayButton $w={20} aria-label="Hidden icons"><Icon w={10} box="0 0 10 10"><path d="M.8 7 5 3l4.200 4" stroke="#fff" strokeWidth="1.300" /></Icon></TrayButton>
          <TrayButton $w={33} aria-label="OneDrive"><Icon w={15} h={10} box="0 0 15 10"><path d="M3.500 9A3 3 0 0 1 3 3.500a4.500 4.500 0 0 1 8-.5A3.200 3.200 0 0 1 11.500 9z" fill="#b8b8b8" /><path d="M4 9q0-4 4-4 2.500-1.500 4-.5A2.500 2.500 0 0 1 11.800 9z" fill="#fff" /></Icon></TrayButton>
          <TrayButton $w={31}><span>ENG</span><span>IN</span></TrayButton>
          <TrayButton $w={29} aria-label="Wi-Fi"><Icon w={14}><path d="M1 6.500a10 10 0 0 1 14 0M3.200 9a7 7 0 0 1 9.600 0M5.500 11.500a4 4 0 0 1 5 0" stroke="#fff" strokeWidth="1.300" /><circle cx="8" cy="13.500" r="1.500" fill="#fff" /></Icon></TrayButton>
          <TrayButton $w={12} aria-label="Muted"><Icon w={13}><path d="M1 6h3l4-4v12L4 10H1zM11 6l4 4M15 6l-4 4" stroke="#fff" strokeWidth="1.200" /></Icon></TrayButton>
          <TrayButton $w={29} aria-label="Battery"><Icon w={14}><rect x="4.500" y="5" width="9.500" height="7.500" rx="1.500" stroke="#fff" strokeWidth="1.300" /><path d="M15.500 7.500v2.500" stroke="#fff" /><path d="M1 10c0-5 2-6 5-8.500C7.500 6 7 10 3 11l-1.500 2z" fill="#fff" /></Icon></TrayButton>
          <Clock $w={57}><span>11:25</span><span>01-08-2023</span></Clock>
          <Count>10</Count>
        </Tray>
      </TaskBar>
    </Page>
  );
}
